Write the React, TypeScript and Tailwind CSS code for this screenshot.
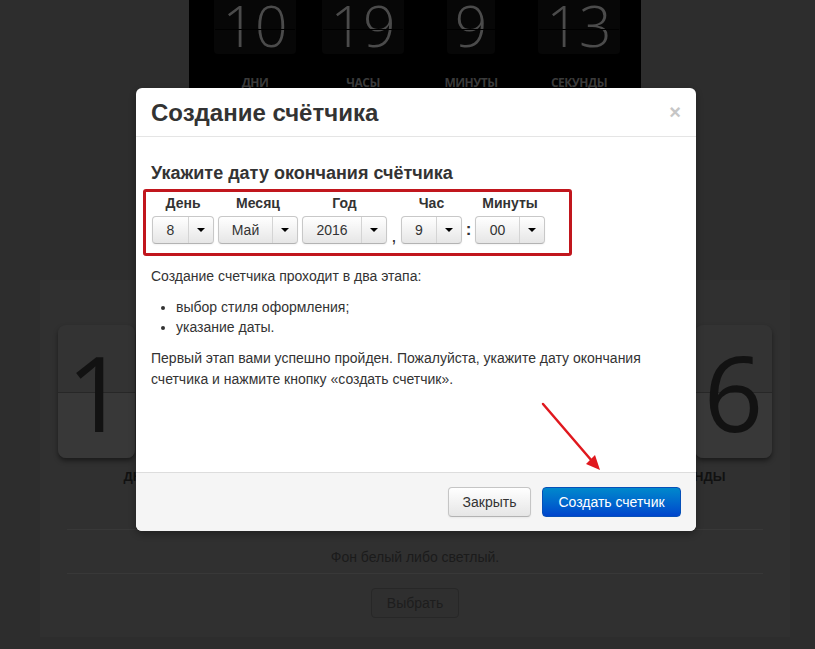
import React from 'react';

const topCounters = [
  { value: '10', label: 'ДНИ' },
  { value: '19', label: 'ЧАСЫ' },
  { value: '9', label: 'МИНУТЫ' },
  { value: '13', label: 'СЕКУНДЫ' },
];

const flipGroups = [
  { digits: ['1', '0'], label: 'ДНИ' },
  { digits: ['1', '9'], label: 'ЧАСЫ' },
  { digits: ['0', '9'], label: 'МИНУТЫ' },
  { digits: ['1', '6'], label: 'СЕКУНДЫ' },
];

const selects = [
  { label: 'День', value: '8', width: 'w-[62px]' },
  { label: 'Месяц', value: 'Май', width: 'w-[80px]' },
  { label: 'Год', value: '2016', width: 'w-[85px]' },
  { label: 'Час', value: '9', width: 'w-[61px]' },
  { label: 'Минуты', value: '00', width: 'w-[70px]' },
];

const Select = ({ label, value, width }: { label: string; value: string; width: string }) => (
  <div className={`flex flex-col items-center ${width}`}>
    <div className="text-[14px] font-bold leading-[18px] text-[#333]">{label}</div>
    <div className="mt-[4px] flex h-[28px] w-full rounded-[4px] border border-[#c8c8c8] border-b-[#b3b3b3] bg-gradient-to-b from-white to-[#e6e6e6] shadow-[inset_0_1px_0_rgba(255,255,255,0.2),0_1px_2px_rgba(0,0,0,0.05)]">
      <div className="flex flex-1 items-center justify-center text-[14px] text-[#333]">{value}</div>
      <div className="flex w-[25px] items-center justify-center border-l border-[#d4d4d4]">
        <span className="h-0 w-0 border-x-[4px] border-t-[4px] border-x-transparent border-t-black" />
      </div>
    </div>
  </div>
);

const FlipCard = ({ digit }: { digit: string }) => (
  <div className="relative h-[133px] w-[77px] overflow-hidden rounded-[8px] shadow-[0_3px_5px_rgba(0,0,0,0.45)]">
    <div className="flex h-full flex-col">
      <div className="h-1/2 bg-[#333333]" />
      <div className="h-1/2 border-t border-[#272727] bg-[#383838]" />
    </div>
    <div className="absolute inset-0 flex items-center justify-center font-['Open_Sans',sans-serif] text-[104px] leading-none text-[#121212]">
      {digit}
    </div>
  </div>
);

export default function App() {
  return (
    <div className="relative h-[649px] w-[815px] overflow-hidden bg-[#2d2d2d] font-['Liberation_Sans',Arial,sans-serif]">
      {/* dark counter preview */}
      <div className="ml-[189px] flex h-[120px] w-[452px] bg-black pl-[12px]">
        {topCounters.map((c) => (
          <div key={c.label} className="relative flex w-[108px] flex-col items-center">
            <div className="mt-[-3px] rounded-[4px] bg-[#070707] px-[8px] font-['Open_Sans',sans-serif] text-[57px] font-light leading-none text-[#4b4b4b]">
              {c.value}
            </div>
            <div className="absolute left-[14px] right-[14px] top-[29px] h-px bg-black" />
            <div className="mt-[23px] font-['Open_Sans',sans-serif] text-[12px] font-bold leading-[12px] tracking-[-0.5px] text-[#3b3b3b]">
              {c.label}
            </div>
          </div>
        ))}
      </div>

      {/* style preview panel */}
      <div className="ml-[40px] mt-[160px] h-[357px] w-[750px] bg-[#303030] px-[18px] pt-[45px]">
        <div className="flex justify-between">
          {flipGroups.map((g) => (
            <div key={g.label} className="flex flex-col items-center">
              <div className="flex gap-[5px]">
                {g.digits.map((d, i) => (
                  <FlipCard key={i} digit={d} />
                ))}
              </div>
              <div className="mt-[11px] text-[13px] font-bold leading-[16px] text-[#111]">{g.label}</div>
            </div>
          ))}
        </div>
        <div className="mx-[9px] mt-[44px] border-t border-[#383838]" />
        <div className="mt-[17px] text-center text-[14px] leading-[20px] text-[#1b1b1b]">Фон белый либо светлый.</div>
        <div className="mx-[9px] mt-[6px] border-t border-[#383838]" />
        <div className="mt-[14px] flex justify-center">
          <div className="flex h-[30px] w-[88px] items-center justify-center rounded-[4px] border border-[#272727] bg-[#2f2f2f] text-[14px] text-[#1d1d1d]">
            Выбрать
          </div>
        </div>
      </div>

      {/* modal */}
      <div className="absolute left-[136px] top-[88px] flex h-[443px] w-[560px] flex-col overflow-hidden rounded-[6px] bg-white shadow-[0_3px_7px_rgba(0,0,0,0.3)]">
        <div className="flex h-[49px] shrink-0 items-center justify-between border-b border-[#e5e5e5] px-[15px]">
          <div className="pt-[2px] text-[24px] font-bold leading-[28px] text-[#333]">Создание счётчика</div>
          <div className="text-[20px] font-bold leading-[20px] text-[#c6c6c6]">×</div>
        </div>

        <div className="flex-1 px-[15px] pt-[26px] text-[14px] leading-[20px] text-[#333]">
          <div className="text-[18px] font-bold leading-[20px] text-[#333]">Укажите дату окончания счётчика</div>
          <div className="-ml-[8px] mt-[6px] flex h-[67px] w-[429px] items-start gap-[4px] rounded-[3px] border-[3px] border-[#c1161d] pl-[6px] pt-[2px]">
            <Select {...selects[0]} />
            <Select {...selects[1]} />
            <Select {...selects[2]} />
            <div className="flex w-[6px] justify-center self-stretch pt-[32px] text-[19px] leading-[20px] text-[#333]">,</div>
            <Select {...selects[3]} />
            <div className="flex w-[5px] justify-center pt-[26px] text-[17px] font-bold leading-[20px] text-[#333]">:</div>
            <Select {...selects[4]} />
          </div>

          <p className="mt-[10px]">Создание счетчика проходит в два этапа:</p>
          <ul className="mt-[11px] list-disc pl-[25px]">
            <li>выбор стиля оформления;</li>
            <li>указание даты.</li>
          </ul>
          <p className="mt-[11px] leading-[21px]">
            Первый этап вами успешно пройден. Пожалуйста, укажите дату окончания счетчика и нажмите кнопку «создать счетчик».
          </p>
        </div>

        <div className="flex h-[59px] shrink-0 items-center justify-end gap-[11px] border-t border-[#dddddd] bg-[#f5f5f5] pr-[15px]">
          <button className="flex h-[30px] w-[83px] items-center justify-center rounded-[4px] border border-[#c5c5c5] border-b-[#b3b3b3] bg-gradient-to-b from-white to-[#e6e6e6] text-[14px] text-[#333] shadow-[0_1px_2px_rgba(0,0,0,0.05)]">
            Закрыть
          </button>
          <button className="flex h-[30px] w-[139px] items-center justify-center rounded-[4px] border border-[#0650b8] bg-gradient-to-b from-[#0088cc] to-[#0044cc] text-[14px] text-white">
            Создать счетчик
          </button>
        </div>
      </div>

      {/* red arrow annotation */}
      <svg className="absolute left-0 top-0" width="815" height="649" viewBox="0 0 815 649">
        <line x1="543" y1="404" x2="592" y2="461" stroke="#e0181e" strokeWidth="2.5" strokeLinecap="round" />
        <polygon points="600,470 586,464 595,455" fill="#e0181e" />
      </svg>
    </div>
  );
}
